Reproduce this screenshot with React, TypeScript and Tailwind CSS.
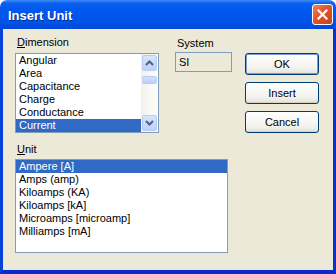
import React from "react";

const dimensions = ["Angular", "Area", "Capacitance", "Charge", "Conductance", "Current"];
const units = [
  "Ampere [A]",
  "Amps (amp)",
  "Kiloamps (KA)",
  "Kiloamps [kA]",
  "Microamps [microamp]",
  "Milliamps [mA]",
];

function ScrollButton({ dir }: { dir: "up" | "down" }) {
  return (
    <div className="h-[16px] w-[15px] mx-auto rounded-[2px] border border-[#B9CCF3] bg-[linear-gradient(to_bottom,#D8E4FC,#BCD0F8)] flex items-center justify-center">
      <svg width="9" height="6" viewBox="0 0 9 6">
        {dir === "up" ? (
          <polyline points="1,5 4.5,1.5 8,5" fill="none" stroke="#4D6185" strokeWidth="2" />
        ) : (
          <polyline points="1,1 4.5,4.5 8,1" fill="none" stroke="#4D6185" strokeWidth="2" />
        )}
      </svg>
    </div>
  );
}

function XpButton({ label, isDefault }: { label: string; isDefault?: boolean }) {
  return (
    <button
      className={`w-[74px] h-[22px] rounded-[3px] border border-[#003C74] bg-[linear-gradient(to_bottom,#FFFFFF,#F3F2EE_70%,#E3E1D8)] text-[11px] text-black leading-none ${isDefault ? "shadow-[inset_0_0_0_1px_#7B9BE0]" : "shadow-[inset_0_-1px_0_#D6D0C5]"}`}
    >
      {label}
    </button>
  );
}

export default function App() {
  return (
    <div className="w-[336px] h-[274px] flex flex-col font-['Liberation_Sans',Arial,sans-serif] text-[11px] text-black select-none">
      {/* title bar */}
      <div className="h-[29px] shrink-0 rounded-t-[7px] bg-[linear-gradient(to_bottom,#3C8CFB_0%,#0A5FEF_12%,#0058EE_30%,#0055E8_75%,#0046D6_100%)] flex items-center pl-[8px] pr-[3px]">
        <span className="text-white font-bold text-[13px] leading-none mt-[1px] [text-shadow:1px_1px_0_#0A2C8A]">
          Insert Unit
        </span>
        <div className="ml-auto w-[21px] h-[21px] rounded-[3px] border border-white bg-[linear-gradient(135deg,#E98561,#E0532D_45%,#C8401F)] flex items-center justify-center">
          <svg width="11" height="11" viewBox="0 0 11 11">
            <path d="M1.5 1.5 L9.5 9.5 M9.5 1.5 L1.5 9.5" stroke="white" strokeWidth="2.2" strokeLinecap="square" />
          </svg>
        </div>
      </div>

      {/* body */}
      <div className="flex-1 bg-[#ECE9D8] border-l-[3px] border-r-[3px] border-b-[4px] border-l-[#0842D8] border-r-[#0735C9] border-b-[#0A2ACB] pl-[12px] pt-[7px]">
        <div className="flex items-start">
          {/* dimension */}
          <div className="w-[144px]">
            <div className="h-[13px] leading-[13px] ml-[2px]">
              <span className="underline">D</span>imension
            </div>
            <div className="mt-[4px] h-[80px] border border-[#7F9DB9] bg-white flex">
              <div className="flex-1 leading-[13px]">
                {dimensions.map((d, i) => (
                  <div
                    key={d}
                    className={`h-[13px] pl-[3px] ${i === dimensions.length - 1 ? "bg-[#316AC5] text-white" : ""}`}
                  >
                    {d}
                  </div>
                ))}
              </div>
              <div className="w-[17px] bg-[linear-gradient(to_right,#F3F1EC,#FEFEFB)] flex flex-col pt-[1px] pb-[1px]">
                <ScrollButton dir="up" />
                <div className="mt-[5px] h-[8px] w-[15px] mx-auto rounded-[2px] border border-[#B9CCF3] bg-[linear-gradient(to_bottom,#D3E0FD,#BACFF8)]" />
                <div className="flex-1" />
                <ScrollButton dir="down" />
              </div>
            </div>
          </div>

          {/* system */}
          <div className="ml-[16px] mt-[1px]">
            <div className="h-[13px] leading-[13px] ml-[2px]">System</div>
            <div className="mt-[2px] w-[57px] h-[20px] border border-[#7F9DB9] bg-[#ECE9D8] pl-[3px] leading-[18px]">
              SI
            </div>
          </div>

          {/* buttons */}
          <div className="ml-[13px] mt-[17px] flex flex-col gap-[7px]">
            <XpButton label="OK" isDefault />
            <XpButton label="Insert" />
            <XpButton label="Cancel" />
          </div>
        </div>

        {/* unit */}
        <div className="mt-[10px] w-[213px]">
          <div className="h-[13px] leading-[13px] ml-[2px]">
            <span className="underline">U</span>nit
          </div>
          <div className="mt-[3px] h-[94px] border border-[#7F9DB9] bg-white leading-[13px]">
            {units.map((u, i) => (
              <div key={u} className={`h-[13px] pl-[3px] ${i === 0 ? "bg-[#316AC5] text-white" : ""}`}>
                {u}
              </div>
            ))}
          </div>
        </div>
      </div>
    </div>
  );
}
